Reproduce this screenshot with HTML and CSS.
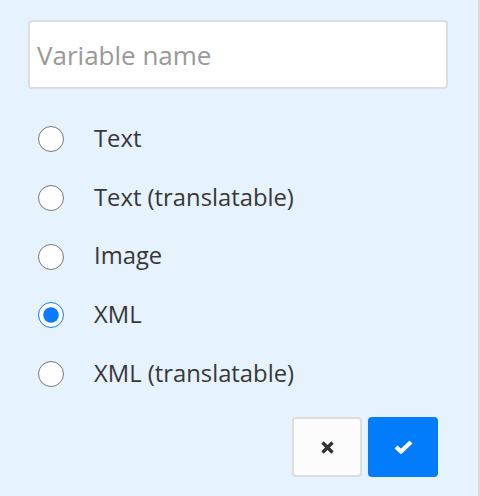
FILE: index.html
```html
<!DOCTYPE html>
<html>

<head>
    <title>New variable</title>
    <link rel="stylesheet" href="styles.css">
</head>

<body>
    <div class="panel">
        <input class="name" type="text" placeholder="Variable name">

        <div class="types">
            <label class="type"><input type="radio" name="type" value="text"><span>Text</span></label>
            <label class="type"><input type="radio" name="type" value="text-tr"><span>Text (translatable)</span></label>
            <label class="type"><input type="radio" name="type" value="image"><span>Image</span></label>
            <label class="type"><input type="radio" name="type" value="xml" checked><span>XML</span></label>
            <label class="type"><input type="radio" name="type" value="xml-tr"><span>XML (translatable)</span></label>
        </div>

        <div class="actions">
            <button class="btn cancel" title="Cancel">
                <svg width="13" height="13" viewBox="0 0 13 13">
                    <path d="M1.5 1.5 L11.5 11.5 M11.5 1.5 L1.5 11.5" stroke="#333" stroke-width="3.4" fill="none"/>
                </svg>
            </button>
            <button class="btn ok" title="Save">
                <svg width="19" height="14" viewBox="0 0 19 14">
                    <polyline points="2,7 7,11.5 17,2" stroke="#fff" stroke-width="4.2" fill="none"/>
                </svg>
            </button>
        </div>
    </div>
</body>

</html>
```

FILE: styles.css
```css
body {
    margin: 0;
    font-family: "Open Sans", "Liberation Sans", sans-serif;
}

.panel {
    box-sizing: border-box;
    width: 480px;
    height: 496px;
    padding: 20px 30px 0 28px;
    background-color: #e6f2fe;
    border-right: 2px solid #dadada;
}

.name {
    box-sizing: border-box;
    display: block;
    width: 420px;
    height: 69px;
    margin: 0;
    padding: 0 7px;
    border: 2px solid #dddddd;
    border-radius: 4px;
    background-color: #fff;
    font-family: inherit;
    font-size: 26px;
    color: #333;
    outline: none;
}

.name::placeholder {
    color: #999;
}

.types {
    margin-top: 21px;
}

.type {
    display: flex;
    align-items: center;
    height: 58.7px;
    font-size: 23.8px;
    color: #383838;
}

.type span {
    margin-bottom: 3px;
}

.type input {
    width: 26px;
    height: 26px;
    margin: 0 30px 0 10px;
    accent-color: #0a7bff;
}

.actions {
    display: flex;
    justify-content: flex-end;
    gap: 6px;
    margin-top: 14px;
    margin-right: 10px;
}

.btn {
    display: flex;
    align-items: center;
    justify-content: center;
    width: 70px;
    height: 60px;
    padding: 0;
    border-radius: 4px;
    cursor: pointer;
}

.btn.cancel {
    background-color: #fcfcfc;
    border: 2px solid #dddddd;
}

.btn.ok {
    background-color: #037cfc;
    border: none;
}
```
